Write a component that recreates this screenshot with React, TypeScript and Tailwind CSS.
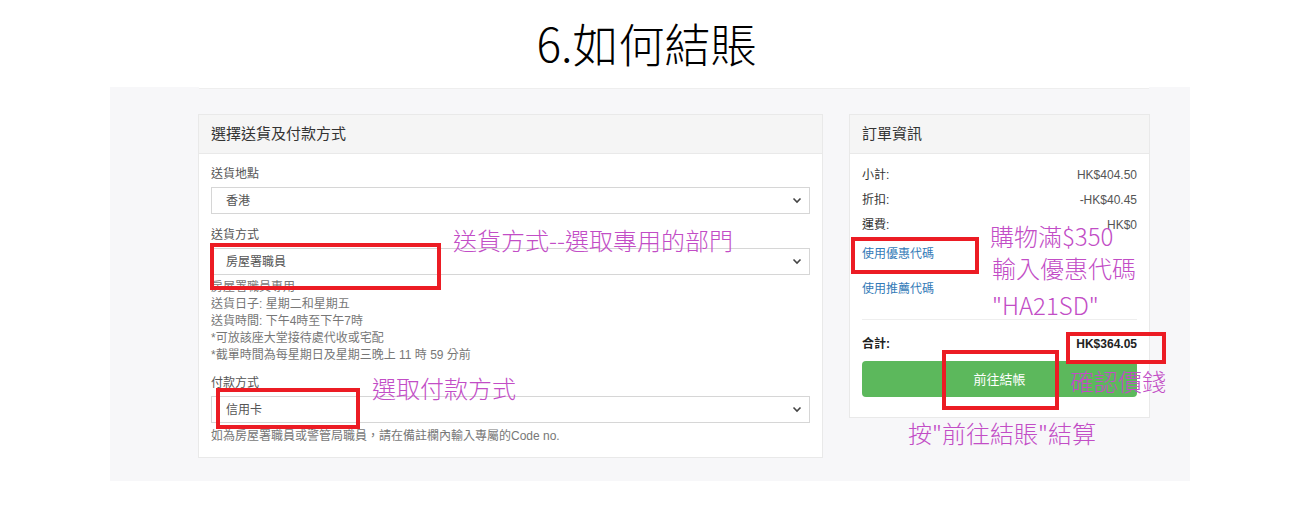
import React from 'react';

const ui = { fontFamily: '"Liberation Sans", "Noto Sans CJK TC", sans-serif' };
const cjk = { fontFamily: '"Noto Sans CJK TC", sans-serif' };

function Chevron() {
    return (
        <svg width="10" height="7" viewBox="0 0 10 7" className="text-[#444]">
            <path d="M1.5 1.5 L5 5 L8.5 1.5" fill="none" stroke="currentColor" strokeWidth="1.6" />
        </svg>
    );
}

function SelectBox({ value }: { value: string }) {
    return (
        <div className="h-[27px] border border-[#d6d6d6] bg-white flex items-center justify-between pl-[14px] pr-[7px] text-[12px] text-[#555]">
            <span>{value}</span>
            <Chevron />
        </div>
    );
}

// label + select group
function Field({ label, value }: { label: string; value: string }) {
    return (
        <div className="flex flex-col gap-[4px]">
            <p className="text-[12px] leading-[17px] text-[#555]">{label}</p>
            <SelectBox value={value} />
        </div>
    );
}

function RedBox({ l, t, w, h }: { l: number; t: number; w: number; h: number }) {
    return (
        <div
            className="absolute border-[4px] border-[#ec1c24]"
            style={{ left: l, top: t, width: w, height: h }}
        />
    );
}

function Note({ l, t, children }: { l: number; t: number; children: React.ReactNode }) {
    return (
        <p
            className="absolute text-[24px] leading-[24px] font-light text-[#c24dc6] whitespace-nowrap"
            style={{ ...cjk, left: l, top: t }}
        >
            {children}
        </p>
    );
}

export default function App() {
    const totals = [
        { label: '小計:', value: 'HK$404.50' },
        { label: '折扣:', value: '-HK$40.45' },
        { label: '運費:', value: 'HK$0' },
    ];

    return (
        <div className="relative w-[1293px] h-[510px] bg-white overflow-hidden" style={ui}>
            {/* Title */}
            <div className="h-[87px] flex items-center justify-center pb-[4px]">
                <h1 className="text-[46px] leading-none font-light text-black" style={cjk}>
                    6.如何結賬
                </h1>
            </div>

            {/* Page screenshot */}
            <div className="ml-[110px] w-[1080px] h-[394px] bg-[#f7f7f9]">
                <div className="ml-[89px] w-[950px] h-[2px] bg-white border-b border-[#eeeeee]" />
                <div className="flex items-start gap-[26px] pl-[88px] pt-[25px]">
                    {/* Left card */}
                    <div className="w-[625px] bg-white border border-[#e9e9e9]">
                        <div className="h-[39px] bg-[#f5f5f5] border-b border-[#e9e9e9] flex items-center px-[12px] text-[15px] text-[#333]">
                            選擇送貨及付款方式
                        </div>
                        <div className="flex flex-col px-[12px] pt-[12px] pb-[12px]">
                            <Field label="送貨地點" value="香港" />
                            <div className="mt-[13px]">
                                <Field label="送貨方式" value="房屋署職員" />
                            </div>
                            <div className="mt-[4px] text-[12px] leading-[17px] text-[#777]">
                                <p>房屋署職員專用</p>
                                <p>送貨日子: 星期二和星期五</p>
                                <p>送貨時間: 下午4時至下午7時</p>
                                <p>*可放該座大堂接待處代收或宅配</p>
                                <p>*截單時間為每星期日及星期三晚上 11 時 59 分前</p>
                            </div>
                            <div className="mt-[11px]">
                                <Field label="付款方式" value="信用卡" />
                            </div>
                            <p className="mt-[5px] text-[12px] leading-[17px] text-[#777]">
                                如為房屋署職員或警管局職員，請在備註欄內輸入專屬的Code no.
                            </p>
                        </div>
                    </div>

                    {/* Right card */}
                    <div className="w-[301px] bg-white border border-[#e9e9e9]">
                        <div className="h-[39px] bg-[#f5f5f5] border-b border-[#e9e9e9] flex items-center px-[12px] text-[15px] text-[#333]">
                            訂單資訊
                        </div>
                        <div className="flex flex-col px-[12px] pt-[13px] pb-[20px] text-[12px] leading-[17px] text-[#333]">
                            <div className="flex flex-col gap-[8px]">
                                {totals.map((row) => (
                                    <div key={row.label} className="flex justify-between">
                                        <span>{row.label}</span>
                                        <span className="text-[#555]">{row.value}</span>
                                    </div>
                                ))}
                            </div>
                            <p className="mt-[12px] text-[#337ab7]">使用優惠代碼</p>
                            <p className="mt-[18px] text-[#337ab7]">使用推薦代碼</p>
                            <div className="mt-[21px] border-t border-[#eeeeee]" />
                            <div className="mt-[16px] flex justify-between font-bold text-[#222]">
                                <span>合計:</span>
                                <span>HK$364.05</span>
                            </div>
                            <button className="mt-[8px] w-full h-[36px] rounded-[4px] bg-[#5cb85c] text-white text-[13px]">
                                前往結帳
                            </button>
                        </div>
                    </div>
                </div>
            </div>

            {/* Annotations */}
            <RedBox l={210} t={243} w={231} h={47} />
            <RedBox l={216} t={388} w={144} h={41} />
            <RedBox l={851} t={237} w={128} h={37} />
            <RedBox l={942} t={350} w={117} h={60} />
            <RedBox l={1066} t={332} w={100} h={32} />

            <Note l={453} t={228}>送貨方式--選取專用的部門</Note>
            <Note l={372} t={376}>選取付款方式</Note>
            <Note l={990} t={224}>購物滿$350</Note>
            <Note l={992} t={256}>輸入優惠代碼</Note>
            <Note l={992} t={293}>"HA21SD"</Note>
            <Note l={1070} t={369}>確認價錢</Note>
            <Note l={908} t={421}>按"前往結賬"結算</Note>
        </div>
    );
}
